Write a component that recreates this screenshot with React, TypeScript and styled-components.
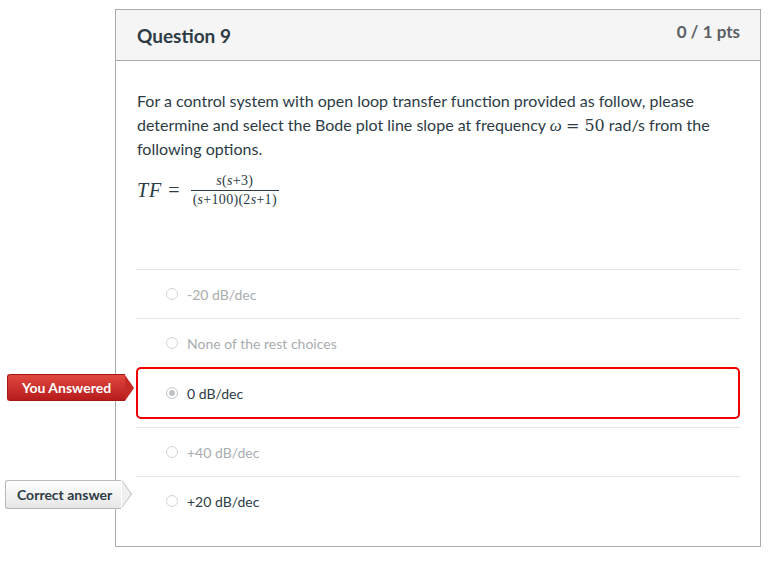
import React from "react";
import styled, { createGlobalStyle, css } from "styled-components";

const Global = createGlobalStyle`
  html, body { margin: 0; padding: 0; background: #fff; }
  body { font-family: Lato, "Noto Sans", "Liberation Sans", sans-serif; color: #2d3b45; }
`;

const Page = styled.div`
  padding: 9px 0 0 115px;
  width: 646px;
`;

const Card = styled.div`
  border: 1px solid #aaaaaa;
  background: #fff;
  box-sizing: border-box;
  height: 538px;
`;

const Header = styled.div`
  display: flex;
  justify-content: space-between;
  align-items: flex-start;
  height: 51px;
  box-sizing: border-box;
  background: #f5f5f5;
  border-bottom: 1px solid #aaaaaa;
  padding: 0 20px 0 21px;
`;

const Title = styled.h2`
  margin: 0;
  font-size: 19px;
  font-weight: 700;
  line-height: 52px;
  color: #2d3b45;
`;

const Points = styled.div`
  font-size: 17px;
  font-weight: 700;
  color: #5b6064;
  line-height: 20px;
  margin-top: 12px;
`;

const Body = styled.div`
  padding: 28px 20px 0 20px;
`;

const Text = styled.p`
  margin: 0 0 0 1px;
  font-size: 16px;
  line-height: 24px;
  color: #2d3b45;
`;

const MathVar = styled.span`
  font-family: "Liberation Serif", "DejaVu Serif", serif;
  font-style: italic;
  font-size: 17px;
  line-height: 1;
`;

const MathRel = styled.span`
  font-family: "DejaVu Serif", "Liberation Serif", serif;
  font-size: 16px;
  line-height: 1;
`;

const Formula = styled.div`
  display: flex;
  align-items: center;
  gap: 6px;
  margin: 9px 0 0 1px;
  font-family: "Liberation Serif", "DejaVu Serif", serif;
  color: #2d3b45;
  height: 40px;
`;

const Lhs = styled.span`
  font-size: 20px;
  font-style: italic;
  letter-spacing: 1px;
`;

const Eq = styled.span`
  font-size: 20px;
  margin: 0 5px 0 0;
`;

const Frac = styled.span`
  display: inline-flex;
  flex-direction: column;
  align-items: center;
  font-size: 14px;
  line-height: 16px;
  letter-spacing: 0.3px;
`;

const Num = styled.span`
  padding: 0 2px 1px;
`;

const Den = styled.span`
  border-top: 1px solid #2d3b45;
  padding: 1px 2px 0;
`;

const Answers = styled.div`
  margin-top: 59px;
`;

const Row = styled.div<{ $selected?: boolean; $muted?: boolean }>`
  position: relative;
  display: flex;
  align-items: center;
  gap: 9px;
  height: 49px;
  box-sizing: border-box;
  padding-left: 30px;
  border-top: 1px solid #e6e6e6;
  font-size: 14px;
  color: ${(p) => (p.$muted ? "#a8adb0" : "#2d3b45")};
  ${(p) =>
    p.$selected &&
    css`
      border: 2px solid #f00000;
      border-radius: 5px;
      padding-left: 28px;
      height: 52px;
      margin: 0 0 8px;
    `}
`;

const Radio = styled.span<{ $checked?: boolean }>`
  width: 12px;
  height: 12px;
  border-radius: 50%;
  border: 1px solid #d3d6d8;
  box-sizing: border-box;
  background: #fff;
  display: inline-flex;
  align-items: center;
  justify-content: center;
  ${(p) =>
    p.$checked &&
    css`
      border-color: #c5c8ca;
      &::after {
        content: "";
        width: 6px;
        height: 6px;
        border-radius: 50%;
        background: #c0c3c5;
      }
    `}
`;

const Badge = styled.div<{ $tone: "red" | "gray" }>`
  position: absolute;
  height: 27px;
  box-sizing: border-box;
  display: flex;
  align-items: center;
  font-size: 14px;
  font-weight: 700;
  border-radius: 3px 0 0 3px;
  ${(p) =>
    p.$tone === "red"
      ? css`
          top: 5px;
          left: -131px;
          width: 118px;
          padding-left: 14px;
          color: #fff;
          background: linear-gradient(#e0483f, #b71c1c);
          border: 1px solid #a51818;
          border-right: none;
          &::after {
            content: "";
            position: absolute;
            right: -9px;
            top: 0px;
            border-top: 13px solid transparent;
            border-bottom: 13px solid transparent;
            border-left: 9px solid #c42a26;
          }
        `
      : css`
          top: 3px;
          left: -131px;
          width: 116px;
          padding-left: 11px;
          color: #2d3b45;
          height: 29px;
          background: linear-gradient(#ffffff, #e6e6e6);
          border: 1px solid #b8b8b8;
          border-right: none;
          &::before {
            content: "";
            position: absolute;
            right: -11px;
            top: -1px;
            border-top: 14px solid transparent;
            border-bottom: 14px solid transparent;
            border-left: 10px solid #b8b8b8;
          }
          &::after {
            content: "";
            position: absolute;
            right: -10px;
            top: 0px;
            border-top: 13px solid transparent;
            border-bottom: 13px solid transparent;
            border-left: 9px solid #efefef;
          }
        `}
`;

export default function App() {
  return (
    <>
      <Global />
      <Page>
        <Card>
          <Header>
            <Title>Question 9</Title>
            <Points>0 / 1 pts</Points>
          </Header>
          <Body>
            <Text>
              For a control system with open loop transfer function provided as follow, please
              determine and select the Bode plot line slope at frequency <MathVar>ω</MathVar>{" "}
              <MathRel>= 50</MathRel> rad/s from the following options.
            </Text>
            <Formula>
              <Lhs>TF</Lhs>
              <Eq>=</Eq>
              <Frac>
                <Num>
                  <i>s</i>(<i>s</i>+3)
                </Num>
                <Den>
                  (<i>s</i>+100)(2<i>s</i>+1)
                </Den>
              </Frac>
            </Formula>
            <Answers>
              <Row $muted>
                <Radio />
                -20 dB/dec
              </Row>
              <Row $muted>
                <Radio />
                None of the rest choices
              </Row>
              <Row $selected>
                <Badge $tone="red">You Answered</Badge>
                <Radio $checked />
                0 dB/dec
              </Row>
              <Row $muted>
                <Radio />
                +40 dB/dec
              </Row>
              <Row>
                <Badge $tone="gray">Correct answer</Badge>
                <Radio />
                +20 dB/dec
              </Row>
            </Answers>
          </Body>
        </Card>
      </Page>
    </>
  );
}
